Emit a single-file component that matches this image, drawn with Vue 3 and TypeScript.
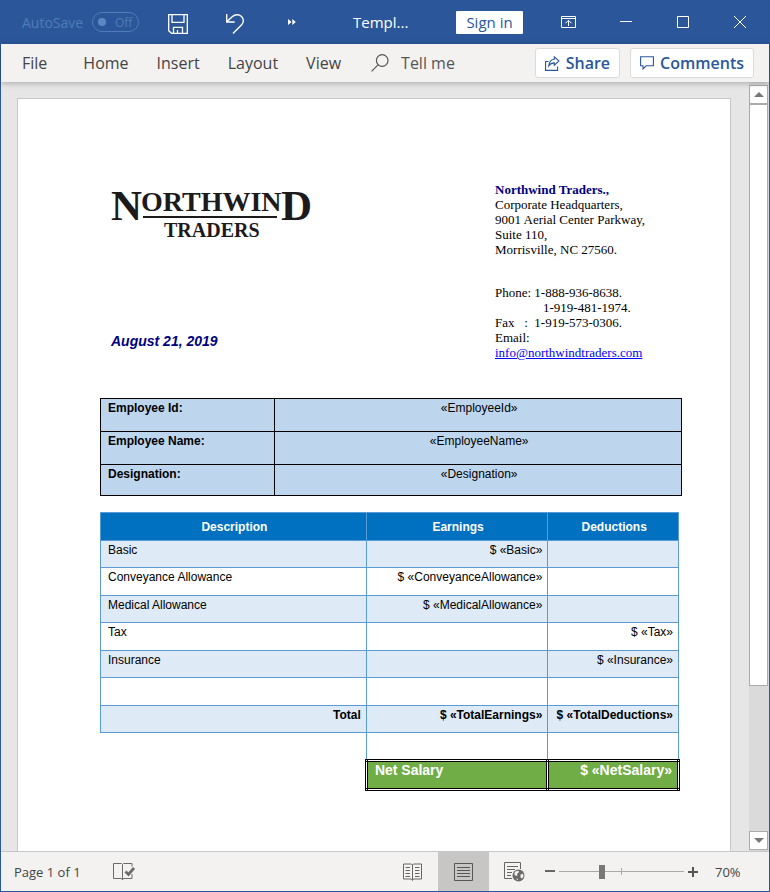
<script setup lang="ts">
import { ref } from 'vue'

interface PayLine {
  description: string
  earnings: string
  deductions: string
}

const tabs: string[] = ['File', 'Home', 'Insert', 'Layout', 'View']

const employee: { label: string; value: string }[] = [
  { label: 'Employee Id:', value: '«EmployeeId»' },
  { label: 'Employee Name:', value: '«EmployeeName»' },
  { label: 'Designation:', value: '«Designation»' },
]

const lines: PayLine[] = [
  { description: 'Basic', earnings: '$ «Basic»', deductions: '' },
  { description: 'Conveyance Allowance', earnings: '$ «ConveyanceAllowance»', deductions: '' },
  { description: 'Medical Allowance', earnings: '$ «MedicalAllowance»', deductions: '' },
  { description: 'Tax', earnings: '', deductions: '$ «Tax»' },
  { description: 'Insurance', earnings: '', deductions: '$ «Insurance»' },
  { description: '', earnings: '', deductions: '' },
]

const autoSave = ref(false)
const query = ref('')
const zoom = ref(34)
</script>

<template>
  <div class="window">
    <header class="titlebar">
      <label class="autosave">
        <span>AutoSave</span>
        <span class="toggle">
          <input v-model="autoSave" type="checkbox" disabled />
          <span>Off</span>
        </span>
      </label>
      <button class="quick low" type="button" aria-label="Save">
        <svg width="20" height="20" viewBox="0 0 20 20" fill="none" stroke="#fff" stroke-width="1.3">
          <path d="M.7.7h18.600v18.600H3.500L.7 16.600z M4 .7v7.600h12V.7 M5.500 19.300v-6h9v6 M9.500 19v-3" />
        </svg>
      </button>
      <button class="quick low" type="button" aria-label="Undo">
        <svg width="20" height="20" viewBox="0 0 20 20" fill="none" stroke="#fff" stroke-width="1.4">
          <path d="M1.700 0v8h8 M2 7.600 7.200 2.800C10 .2 14 .1 16.500 2.400c2.600 2.600 2.400 6.200-.1 8.700L8 19.500" />
        </svg>
      </button>
      <button class="quick" type="button" aria-label="More commands">
        <svg width="8" height="6" viewBox="0 0 8 6" fill="#fff">
          <path d="M0 0v6l3.500-3z M4.300 0v6l3.500-3z" />
        </svg>
      </button>
      <span class="title">Templ...</span>
      <button class="signin" type="button">Sign in</button>
      <button class="caption" type="button" aria-label="Ribbon display options">
        <svg width="15" height="12" viewBox="0 0 15 12" fill="none" stroke="#fff">
          <path d="M.5.5h14v11H.5z M.5 2.500h14 M7.500 10V4.500 M4.500 7.300l3-3 3 3" />
        </svg>
      </button>
      <button class="caption" type="button" aria-label="Minimize">
        <svg width="12" height="12" viewBox="0 0 12 12" stroke="#fff"><path d="M0 5.500h12" /></svg>
      </button>
      <button class="caption" type="button" aria-label="Maximize">
        <svg width="12" height="12" viewBox="0 0 12 12" fill="none" stroke="#fff"><path d="M.5.5h11v11H.5z" /></svg>
      </button>
      <button class="caption" type="button" aria-label="Close">
        <svg width="12" height="12" viewBox="0 0 12 12" stroke="#fff"><path d="M0 0l12 12M12 0 0 12" /></svg>
      </button>
    </header>

    <nav class="ribbon">
      <button v-for="tab in tabs" :key="tab" class="tab" type="button">{{ tab }}</button>
      <label class="search">
        <svg width="18" height="18" viewBox="0 0 18 18" fill="none" stroke="#555" stroke-width="1.2">
          <circle cx="11.200" cy="6.500" r="5.800" />
          <path d="M7.200 10.700.6 17.400" />
        </svg>
        <input v-model="query" type="text" placeholder="Tell me" aria-label="Tell me" />
      </label>
      <button class="action" type="button">
        <svg width="15" height="15" viewBox="0 0 15 15" fill="none" stroke="#2b579a" stroke-width="1.1">
          <path d="M3.500 5.500H.6v8.900h12v-4" />
          <path d="M9.300.8 14 5 9.300 9.200V6.900C7 6.800 5.300 7.800 3.700 10 4.200 5.800 6.300 3.500 9.300 3.200z" />
        </svg>
        Share
      </button>
      <button class="action" type="button">
        <svg width="14" height="14" viewBox="0 0 14 14" fill="none" stroke="#2b579a" stroke-width="1.1">
          <path d="M.6.8h12.800v9H6.200L3 12.900V9.800H.6z" />
        </svg>
        Comments
      </button>
    </nav>

    <main class="workspace">
      <article class="page">
        <section class="letterhead">
          <div class="brand">
            <svg class="logo" width="204" height="66" viewBox="0 0 204 66" role="img" aria-label="Northwind Traders">
              <g fill="#1c1a1b" font-family="'Liberation Serif', serif" font-weight="700">
                <text x="0" y="42" font-size="43">N</text>
                <text x="30" y="33" font-size="28">ORTHWIN</text>
                <text x="170" y="42" font-size="43">D</text>
                <rect x="32" y="38" width="134" height="2" />
                <text x="53" y="59" font-size="20">TRADERS</text>
              </g>
            </svg>
            <p class="date">August 21, 2019</p>
          </div>
          <address class="contact">
            <p>
              <strong>Northwind Traders.,</strong><br />
              Corporate Headquarters,<br />
              9001 Aerial Center Parkway,<br />
              Suite 110,<br />
              Morrisville, NC 27560.
            </p>
            <p>
              Phone: 1-888-936-8638.<br />
              <span class="second">1-919-481-1974.</span><br />
              Fax &nbsp;&nbsp;:&nbsp; 1-919-573-0306.<br />
              Email:<br />
              <a href="mailto:info@northwindtraders.com">info@northwindtraders.com</a>
            </p>
          </address>
        </section>

        <table class="employee">
          <tbody>
            <tr v-for="row in employee" :key="row.label">
              <th scope="row">{{ row.label }}</th>
              <td>{{ row.value }}</td>
            </tr>
          </tbody>
        </table>

        <table class="pay">
          <colgroup>
            <col class="c1" />
            <col class="c2" />
            <col />
          </colgroup>
          <thead>
            <tr>
              <th scope="col">Description</th>
              <th scope="col">Earnings</th>
              <th scope="col">Deductions</th>
            </tr>
          </thead>
          <tbody>
            <tr v-for="(line, i) in lines" :key="i">
              <td class="name">{{ line.description }}</td>
              <td>{{ line.earnings }}</td>
              <td>{{ line.deductions }}</td>
            </tr>
            <tr class="total">
              <td>Total</td>
              <td>$ «TotalEarnings»</td>
              <td>$ «TotalDeductions»</td>
            </tr>
            <tr>
              <td class="blank"></td>
              <td></td>
              <td></td>
            </tr>
            <tr class="net">
              <td class="blank"></td>
              <td class="name">Net Salary</td>
              <td>$ «NetSalary»</td>
            </tr>
          </tbody>
        </table>
      </article>

      <div class="scrollbar">
        <button type="button" aria-label="Scroll up">
          <svg width="10" height="5" viewBox="0 0 10 5" fill="#777"><path d="M5 0l5 5H0z" /></svg>
        </button>
        <div class="track"><div class="thumb"></div></div>
        <button type="button" aria-label="Scroll down">
          <svg width="10" height="5" viewBox="0 0 10 5" fill="#777"><path d="M0 0h10L5 5z" /></svg>
        </button>
      </div>
    </main>

    <footer class="status">
      <span class="pages">Page 1 of 1</span>
      <button class="proof" type="button" aria-label="Proofing">
        <svg width="22" height="19" viewBox="0 0 22 19" fill="none" stroke="#6b6b6b">
          <path d="M9.500 2.500 8.500 1.500h-8v15h8l1 1.500 1-1.500h8.500V12 M9.500 2.500v14.500 M9.500 2.500l1-1h8.500v3" />
          <path d="M12.500 9.500l3 3 5.500-6.500" stroke-width="2.800" />
        </svg>
      </button>
      <div class="views">
        <button type="button" aria-label="Read mode">
          <svg width="20" height="18" viewBox="0 0 20 18" fill="none" stroke="#666">
            <path d="M9.500 2 8.500 1h-8v15h8l1 1.500 1-1.500h8V1h-8z M9.500 2v15" />
            <path d="M2.500 4.500H7M2.500 7.500H7M2.500 10.500H7M2.500 13.500H7M12 4.500h4.500M12 7.500h4.500M12 10.500h4.500M12 13.500h4.500" />
          </svg>
        </button>
        <button class="active" type="button" aria-label="Print layout">
          <svg width="19" height="18" viewBox="0 0 19 18" fill="none" stroke="#555">
            <path d="M.5.5h18v17H.5z M3 4.500h13M3 7.500h13M3 10.500h13M3 13.500h13" />
          </svg>
        </button>
        <button type="button" aria-label="Web layout">
          <svg width="21" height="20" viewBox="0 0 21 20" fill="none" stroke="#666">
            <path d="M8 16.500H.5V.5h16V7 M3 4.500h11M3 7.500h8M3 10.500h5M3 13.500h4" />
            <circle cx="14.500" cy="13.500" r="6" fill="#6b6b6b" stroke="none" />
            <path d="M11 9.500l4-.8-.5 2-1.600 1.300.6 1.500-1.500.4-1.800-1.600z M16.500 12.500l2.500-.7.6 2.500-1.500 2.300-1.600-1z M12 16.500l2 .4-.3 1.400z" fill="#f3f2f1" stroke="none" />
          </svg>
        </button>
      </div>
      <button class="step" type="button" aria-label="Zoom out">
        <svg width="10" height="10" viewBox="0 0 10 10" fill="#666"><path d="M0 3h10v2H0z" /></svg>
      </button>
      <input v-model="zoom" class="slider" type="range" min="0" max="100" aria-label="Zoom" />
      <button class="step" type="button" aria-label="Zoom in">
        <svg width="10" height="10" viewBox="0 0 10 10" fill="#555"><path d="M4 0h2v4h4v2H6v4H4V6H0V4h4z" /></svg>
      </button>
      <span class="percent">70%</span>
    </footer>
  </div>
</template>

<style>
html,
body {
  margin: 0;
}
</style>

<style scoped>
.window {
  box-sizing: border-box;
  display: flex;
  flex-direction: column;
  min-height: 100vh;
  border: 1px solid #2b579a;
  border-top: 0;
  background: #e6e6e6;
  color: #444;
  font-family: 'Open Sans', 'Noto Sans', sans-serif;
}

button,
input {
  margin: 0;
  padding: 0;
  border: 0;
  background: none;
  color: inherit;
  font: inherit;
}

.titlebar {
  display: flex;
  align-items: stretch;
  height: 44px;
  padding-right: 1px;
  background: #2b579a;
  color: #fff;
  font-size: 15px;
}

.autosave {
  display: flex;
  align-items: center;
  justify-content: space-between;
  box-sizing: border-box;
  width: 138px;
  margin-right: 10px;
  padding-left: 21px;
  color: #4e7cb8;
  font-size: 14px;
}

.toggle {
  box-sizing: border-box;
  display: flex;
  align-items: center;
  gap: 9px;
  width: 47px;
  height: 20px;
  padding-left: 5px;
  border: 1px solid #4e7cb8;
  border-radius: 10px;
  font-size: 12px;
}

.toggle input {
  appearance: none;
  width: 8px;
  height: 8px;
  border-radius: 4px;
  background: #5b88c4;
}

.quick,
.caption {
  display: flex;
  flex: none;
  align-items: center;
  justify-content: center;
  width: 57px;
}

.low {
  padding-top: 3px;
}

.title {
  flex: 1;
  align-self: center;
  padding-left: 33px;
}

.signin {
  align-self: center;
  width: 67px;
  height: 23px;
  margin-right: 17px;
  border-radius: 1px;
  background: #fff;
  color: #2b579a;
  line-height: 20px;
}

.ribbon {
  display: flex;
  align-items: center;
  height: 38px;
  padding: 0 15px 0 21px;
  background: #f3f2f1;
  box-shadow: 0 1px 6px rgba(0, 0, 0, 0.28);
  font-size: 16px;
  z-index: 1;
}

.tab {
  margin-right: 28px;
}

.tab:first-child {
  margin-right: 36px;
}

.search {
  display: flex;
  flex: 1;
  align-items: center;
  gap: 12px;
  min-width: 0;
  padding-left: 2px;
}

.search svg {
  flex: none;
}

.search input {
  width: 100%;
  min-width: 0;
  outline: 0;
}

.search input::placeholder {
  color: #555;
  opacity: 1;
}

.action {
  box-sizing: border-box;
  display: flex;
  flex: none;
  align-items: center;
  gap: 6px;
  height: 30px;
  margin-left: 10px;
  padding: 0 9px;
  border: 1px solid #dcdbda;
  border-radius: 3px;
  background: #fff;
  color: #2b579a;
  font-weight: 600;
}

.workspace {
  display: flex;
  flex: 1;
}

.page {
  display: flex;
  flex: 1;
  flex-direction: column;
  margin-top: 16px;
  margin-left: 16px;
  padding: 79px 48px 40px 82px;
  border: 1px solid #c6c6c6;
  border-bottom: 0;
  background: #fff;
  color: #000;
  font-family: 'Liberation Sans', Arial, sans-serif;
}

.letterhead {
  display: flex;
  justify-content: space-between;
  padding-left: 11px;
}

.brand {
  display: flex;
  flex-direction: column;
  justify-content: space-between;
}

.logo {
  display: block;
}

.date {
  margin: 0 0 10px;
  color: #000080;
  font-size: 14px;
  font-style: italic;
  font-weight: 700;
  line-height: 18px;
}

.contact {
  width: 187px;
  padding-top: 4px;
  font-family: 'Liberation Serif', 'Times New Roman', serif;
  font-size: 13px;
  font-style: normal;
  line-height: 15px;
}

.contact p {
  margin: 0 0 28px;
}

.contact p:last-child {
  margin-bottom: 0;
}

.contact strong {
  color: #000080;
}

.contact a {
  color: #00f;
}

.second {
  padding-left: 48px;
}

table {
  border-collapse: collapse;
  table-layout: fixed;
  font-size: 12px;
  line-height: 16px;
  white-space: nowrap;
}

th,
td {
  padding: 1px 5px 1px 7px;
  vertical-align: top;
}

.employee {
  width: 100%;
  margin-top: 38px;
}

.employee th,
.employee td {
  box-sizing: border-box;
  height: 33px;
  border: 1px solid #000;
  background: #bdd6ee;
  text-align: center;
}

.employee tr:last-child > * {
  height: 31px;
}

.employee th {
  width: 30%;
  text-align: left;
}

.pay {
  width: calc(100% - 2px);
  margin-top: 16px;
}

.c1 {
  width: 46%;
}

.c2 {
  width: 31.4%;
}

.pay th,
.pay td {
  box-sizing: border-box;
  height: 27px;
  border: 1px solid #5b9bd5;
  text-align: right;
}

.pay th {
  height: 28px;
  background: #0070c0;
  color: #fff;
  text-align: center;
  vertical-align: middle;
}

.pay tbody tr:nth-child(even) td {
  height: 28px;
}

.pay tbody tr:nth-child(odd) td {
  background: #deeaf6;
}

.pay td.name {
  text-align: left;
}

.pay .total {
  font-weight: 700;
}

.pay tbody tr td.blank {
  border: 0;
  background: none;
}

.pay tbody .net td:not(.blank) {
  height: 29px;
  padding-top: 0;
  border: 3px double #000;
  background: #70ad47;
  background-clip: padding-box;
  color: #fff;
  font-size: 14px;
  font-weight: 700;
}

.scrollbar {
  display: flex;
  flex-direction: column;
  width: 20px;
  margin-left: 18px;
  padding: 3px 1px 1px 0;
  box-sizing: border-box;
  background: #dadada;
}

.scrollbar button {
  box-sizing: border-box;
  display: flex;
  align-items: center;
  justify-content: center;
  height: 19px;
  border: 1px solid #ababab;
  background: #fff;
}

.track {
  flex: 1;
}

.thumb {
  box-sizing: border-box;
  height: 80%;
  border: 1px solid #ababab;
  background: #fff;
}

.status {
  display: flex;
  align-items: center;
  height: 39px;
  padding: 0 16px 0 13px;
  border-top: 1px solid #c6c6c6;
  background: #f3f2f1;
  font-size: 13px;
}

.pages {
  width: 99px;
}

.proof,
.step {
  display: flex;
}

.views {
  display: flex;
  align-self: stretch;
  margin-left: auto;
}

.views button {
  display: flex;
  align-items: center;
  justify-content: center;
  width: 51px;
}

.views .active {
  background: #c8c6c4;
}

.views + .step {
  margin-left: 5px;
}

.slider {
  appearance: none;
  width: 125px;
  height: 14px;
  margin: 0 4px;
  background:
    linear-gradient(#aaa, #aaa) center / 100% 1px no-repeat,
    linear-gradient(#aaa, #aaa) center / 1px 7px no-repeat;
}

.slider::-webkit-slider-thumb {
  appearance: none;
  width: 6px;
  height: 14px;
  background: #777;
}

.percent {
  width: 38px;
  margin-left: 17px;
}
</style>
